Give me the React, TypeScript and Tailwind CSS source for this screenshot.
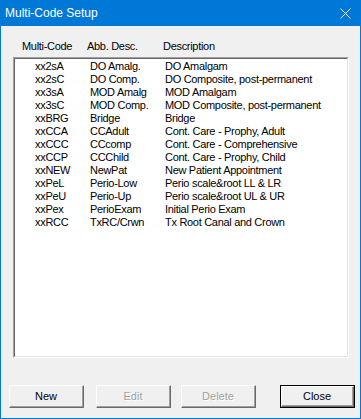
import React from "react";

const rows: [string, string, string][] = [
  ["xx2sA", "DO Amalg.", "DO Amalgam"],
  ["xx2sC", "DO Comp.", "DO Composite, post-permanent"],
  ["xx3sA", "MOD Amalg", "MOD Amalgam"],
  ["xx3sC", "MOD Comp.", "MOD Composite, post-permanent"],
  ["xxBRG", "Bridge", "Bridge"],
  ["xxCCA", "CCAdult", "Cont. Care - Prophy, Adult"],
  ["xxCCC", "CCcomp", "Cont. Care - Comprehensive"],
  ["xxCCP", "CCChild", "Cont. Care - Prophy, Child"],
  ["xxNEW", "NewPat", "New Patient Appointment"],
  ["xxPeL", "Perio-Low", "Perio scale&root LL & LR"],
  ["xxPeU", "Perio-Up", "Perio scale&root UL & UR"],
  ["xxPex", "PerioExam", "Initial Perio Exam"],
  ["xxRCC", "TxRC/Crwn", "Tx Root Canal and Crown"],
];

function Btn({ label, disabled, def, className = "" }: { label: string; disabled?: boolean; def?: boolean; className?: string }) {
  const inner = (
    <div className="flex h-full w-full border-t border-l border-t-white border-l-white border-r border-b border-r-[#696969] border-b-[#696969]">
      <div className="flex h-full w-full items-center justify-center border-r border-b border-r-[#a0a0a0] border-b-[#a0a0a0] bg-[#f0f0f0]">
        <span
          className={
            disabled
              ? "text-[#a0a0a0] [text-shadow:1px_1px_0_#ffffff]"
              : "text-black"
          }
        >
          {label}
        </span>
      </div>
    </div>
  );
  return (
    <div className={"h-[23px] w-[75px] " + (def ? "border border-black " : "") + className}>{inner}</div>
  );
}

export default function App() {
  return (
    <div
      className="flex h-[419px] w-[361px] flex-col bg-[#0078d7] text-[11px] tracking-[-0.3px] text-black"
      style={{ fontFamily: '"Liberation Sans", Arial, sans-serif' }}
    >
      <div className="flex h-[26px] shrink-0 items-center justify-between pl-[5px] pr-[10px] text-[12px] tracking-normal text-white">
        <span className="leading-none">Multi-Code Setup</span>
        <svg width="11" height="11" viewBox="0 0 11 11" className="mt-[0px]">
          <path d="M0.5 0.5 L10.5 10.5 M10.5 0.5 L0.5 10.5" stroke="#ffffff" strokeWidth="1" fill="none" />
        </svg>
      </div>
      <div className="mx-px mb-px flex flex-1 flex-col bg-[#f0f0f0]">
        <div className="mt-[14px] flex h-[13px] pl-[21px] leading-[13px]">
          <div className="w-[65px]">Multi-Code</div>
          <div className="w-[76px]">Abb. Desc.</div>
          <div>Description</div>
        </div>
        <div className="ml-[12px] mt-[4px] h-[301px] w-[336px] border-t border-l border-t-[#a0a0a0] border-l-[#a0a0a0] border-r border-b border-r-white border-b-white">
          <div className="h-full w-full border-t border-l border-t-[#696969] border-l-[#696969] border-r border-b border-r-[#e3e3e3] border-b-[#e3e3e3] bg-white pt-[1px]">
            {rows.map(([c, a, d]) => (
              <div key={c} className="flex h-[13px] pl-[20px] leading-[13px] whitespace-nowrap">
                <div className="w-[55px]">{c}</div>
                <div className="w-[75px]">{a}</div>
                <div>{d}</div>
              </div>
            ))}
          </div>
        </div>
        <div className="mt-[27px] flex pl-[8px] tracking-normal text-[11px]">
          <Btn label="New" />
          <Btn label="Edit" disabled className="ml-[12px]" />
          <Btn label="Delete" disabled className="ml-[10px]" />
          <Btn label="Close" def className="ml-[24px]" />
        </div>
      </div>
    </div>
  );
}
